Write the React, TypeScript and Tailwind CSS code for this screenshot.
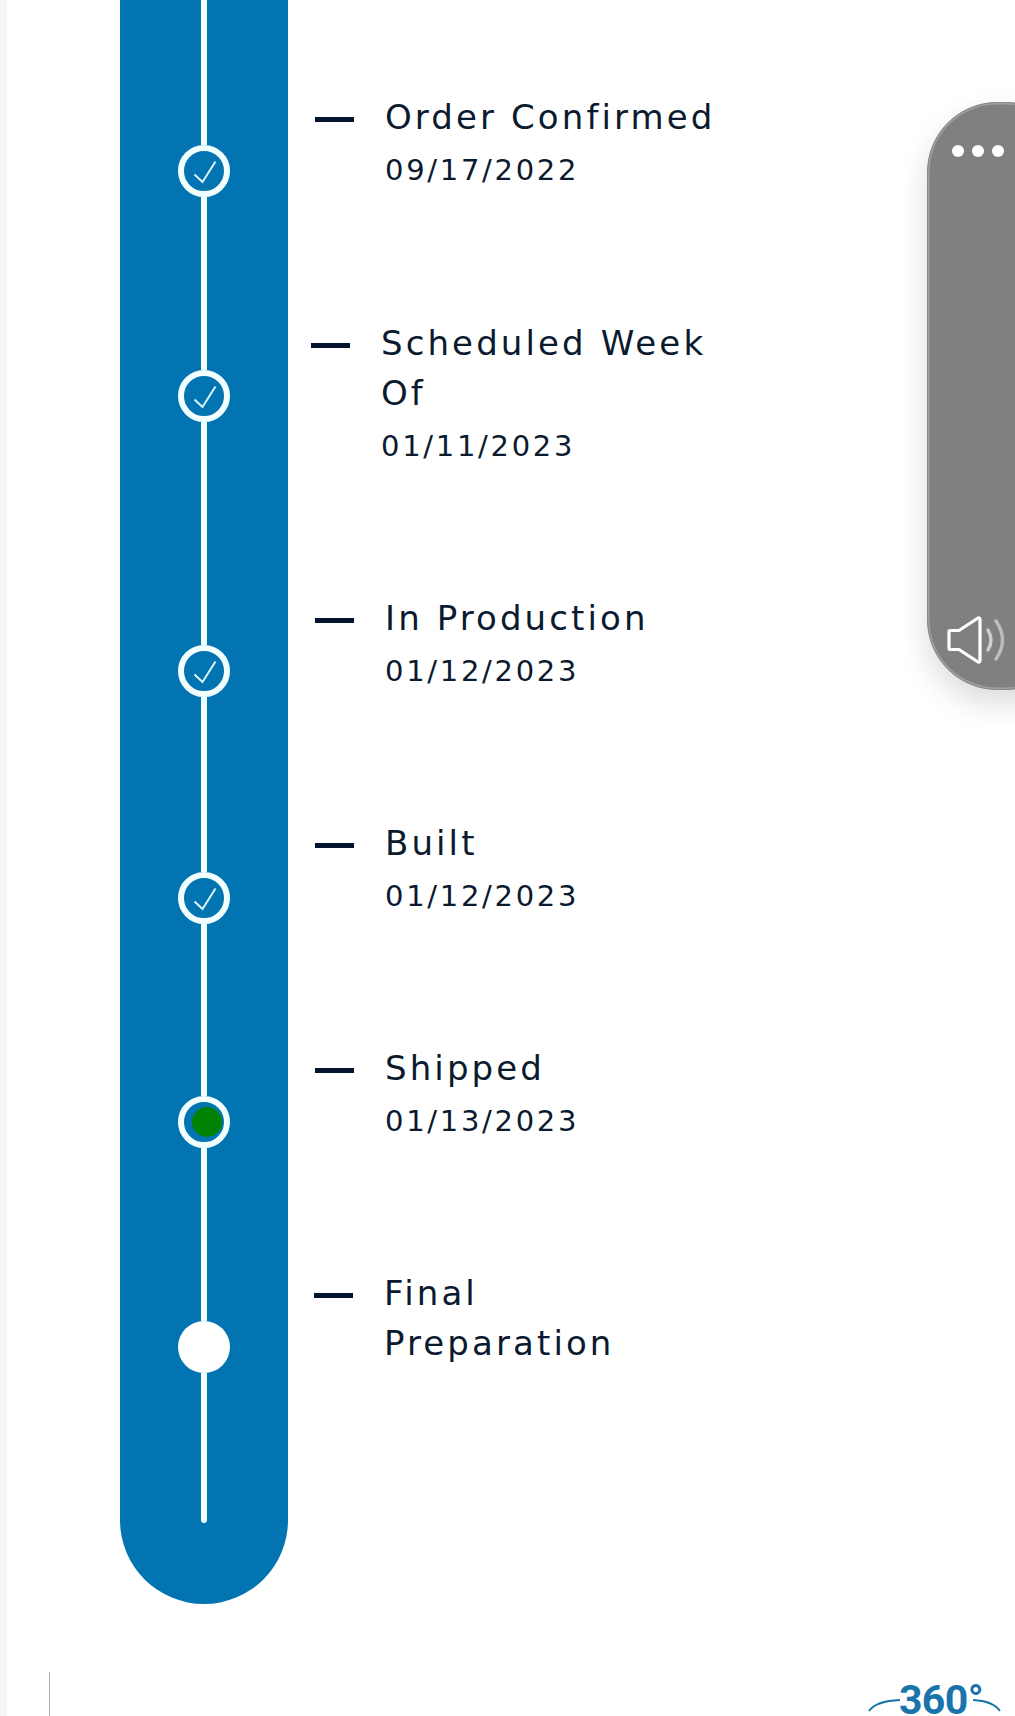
const steps = [
  { title: ['Order Confirmed'], date: '09/17/2022', rowClass: 'ml-[27px] h-[226px]', state: 'done', gap: 'h-[145px]' },
  { title: ['Scheduled Week', 'Of'], date: '01/11/2023', rowClass: 'ml-[23px] h-[275px]', state: 'done', gap: 'h-[173px]' },
  { title: ['In Production'], date: '01/12/2023', rowClass: 'ml-[27px] h-[225px]', state: 'done', gap: 'h-[223px]' },
  { title: ['Built'], date: '01/12/2023', rowClass: 'ml-[27px] h-[225px]', state: 'done', gap: 'h-[175px]' },
  { title: ['Shipped'], date: '01/13/2023', rowClass: 'ml-[27px] h-[225px]', state: 'current', gap: 'h-[172px]' },
  { title: ['Final', 'Preparation'], date: '', rowClass: 'ml-[26px] h-[225px]', state: 'next', gap: 'h-[173px]' },
]

function Marker({ state }: { state: string }) {
  if (state === 'next') {
    return <div className="h-[52px] w-[52px] shrink-0 rounded-full bg-white" />
  }
  return (
    <div className="flex h-[52px] w-[52px] shrink-0 items-center justify-center rounded-full border-[6px] border-[#f2ffff]">
      {state === 'current' ? (
        <div className="ml-[5px] h-[30px] w-[30px] shrink-0 rounded-full bg-[#028202]" />
      ) : (
        <svg className="shrink-0" width="42" height="42" viewBox="0 0 42 42" fill="none">
          <path d="M11.5 24.5 L19.5 32 L32.5 11.5" stroke="#d8f6f8" strokeWidth="2" />
        </svg>
      )}
    </div>
  )
}

function Timeline() {
  return (
    <div className="flex h-[1604px] w-[168px] shrink-0 flex-col items-center rounded-b-[84px] bg-[#0374b2]">
      {steps.map((step, i) => (
        <div key={i} className="contents">
          <div className={`w-[6px] shrink-0 bg-[#f2ffff] ${step.gap}`} />
          <Marker state={step.state} />
        </div>
      ))}
      <div className="h-[150px] w-[6px] shrink-0 rounded-b-full bg-[#f2ffff]" />
    </div>
  )
}

function StepRow({ step }: { step: (typeof steps)[number] }) {
  return (
    <div className={`flex items-start ${step.rowClass}`}>
      <div className="mt-[25px] h-[5px] w-[39px] shrink-0 bg-[#03152e]" />
      <div className="ml-[31px] w-[345px] text-[#0b1a2e]">
        {step.title.map(line => (
          <div key={line} className="h-[50px] text-[34px] leading-[50px] tracking-[3.1px]">{line}</div>
        ))}
        {step.date && <div className="h-[56px] text-[29px] leading-[56px] tracking-[2.7px]">{step.date}</div>}
      </div>
    </div>
  )
}

function SidePill() {
  return (
    <div className="absolute left-[927px] top-[102px] flex h-[588px] w-[150px] flex-col rounded-[70px] border border-[#8a8a8a] bg-[#808080] pl-[24px] shadow-[inset_0_0_0_1.5px_#a0a0a0,0_14px_30px_rgba(0,0,0,0.14)]">
      <div className="mt-[42px] flex gap-[8px]">
        <span className="h-3 w-3 rounded-full bg-white" />
        <span className="h-3 w-3 rounded-full bg-white" />
        <span className="h-3 w-3 rounded-full bg-white" />
      </div>
      <svg className="-ml-[5px] mt-auto mb-[24px]" width="62" height="50" viewBox="0 0 62 50" fill="none">
        <path d="M3 15.5 L12 15.5 L31 3 Q33 2.5 33 5 L33 45 Q33 47.5 31 47 L12 34.5 L3 34.5 Q2 34.5 2 33 L2 17 Q2 15.5 3 15.5 Z" stroke="#fff" strokeWidth="3.2" strokeLinejoin="round" />
        <path d="M41 15 Q47 25 41 35" stroke="#cfcfcf" strokeWidth="3.4" strokeLinecap="round" />
        <path d="M49 6 Q62 25 49 44" stroke="#bdbdbd" strokeWidth="3.4" strokeLinecap="round" />
      </svg>
    </div>
  )
}

function Footer() {
  return (
    <div className="mt-[68px] flex h-[44px] items-start justify-between overflow-hidden pl-[42px]">
      <div className="h-[44px] w-px bg-[#a9a9a9]" />
      <div className="relative mr-[14px] mt-[9px] flex h-[38px] w-[133px] justify-center">
        <svg className="absolute left-0 top-[13px]" width="133" height="28" viewBox="0 0 133 28" fill="none">
          <path d="M32 6 Q8 7 1 17 M105 6 Q125 7 132 17" stroke="#1a74ab" strokeWidth="2" />
        </svg>
        <span className="ml-[13px] text-[41px] font-bold leading-[38px] tracking-[-0.6px] text-[#1a74ab] [font-family:Roboto,sans-serif]">360°</span>
      </div>
    </div>
  )
}

export default function App() {
  return (
    <div className="relative flex h-[1716px] w-[1015px] overflow-hidden bg-white [font-family:'DejaVu_Sans',sans-serif]">
      <div className="w-[7px] shrink-0 bg-[#f5f5f5]" />
      <div className="min-w-0 flex-1">
        <div className="flex pl-[113px]">
          <Timeline />
          <div className="pt-[92px]">
            {steps.map(step => (
              <StepRow key={step.title[0]} step={step} />
            ))}
          </div>
        </div>
        <Footer />
      </div>
      <SidePill />
    </div>
  )
}
